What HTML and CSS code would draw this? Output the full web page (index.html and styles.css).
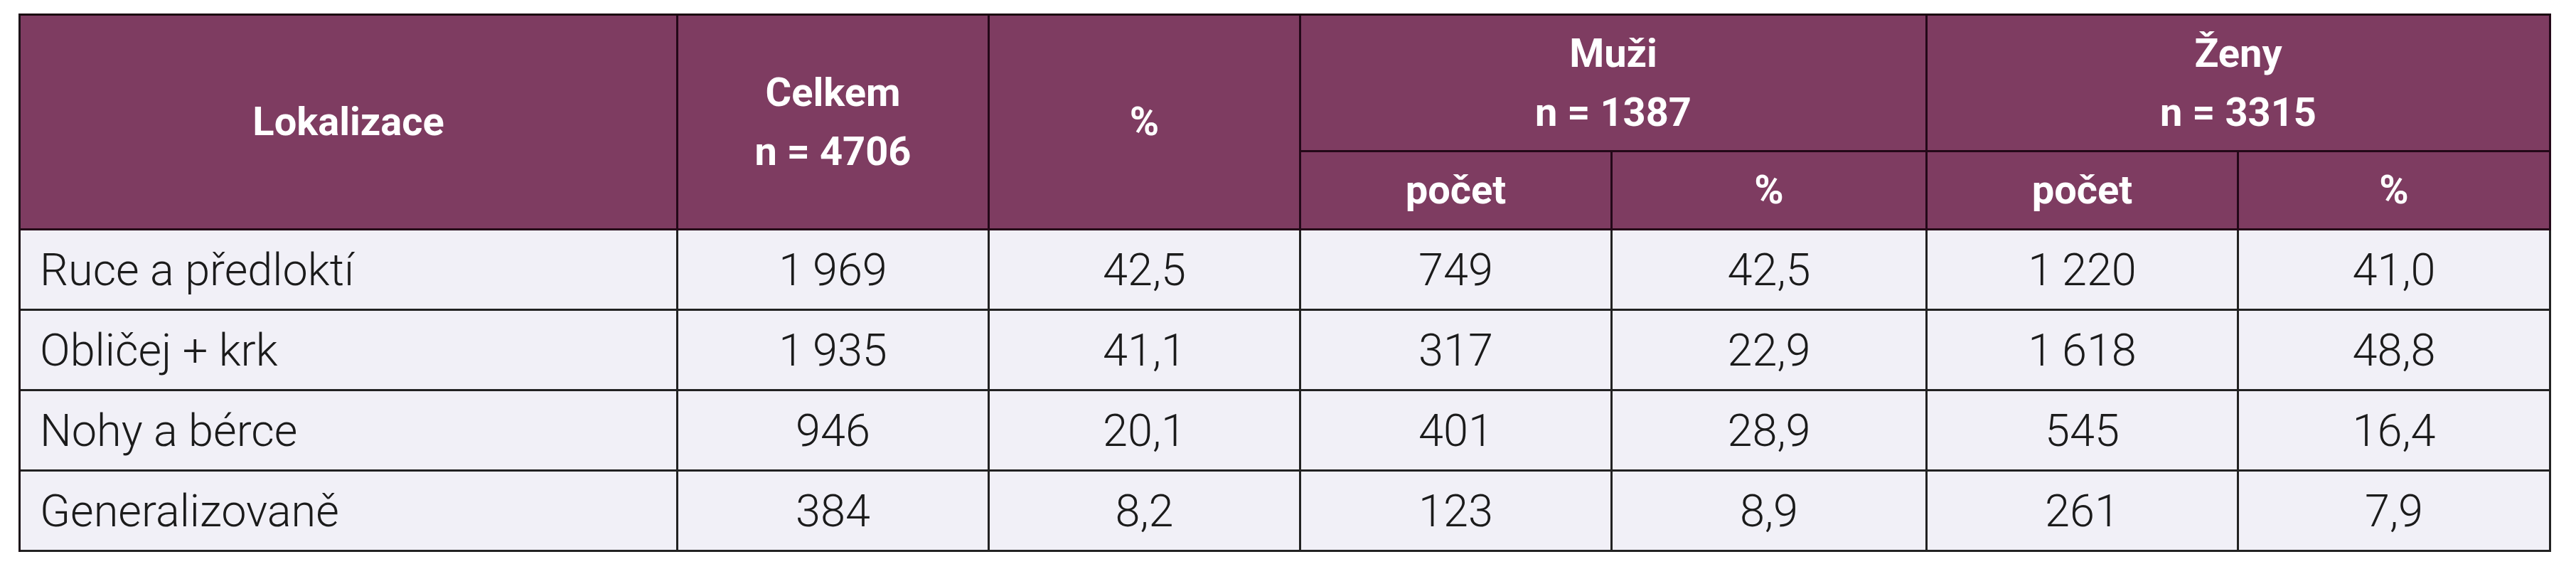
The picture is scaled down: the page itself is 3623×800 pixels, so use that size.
FILE: index.html
```html
<!DOCTYPE html>
<html lang="cs">
<head>
<meta charset="utf-8">
<title>Lokalizace</title>
<link rel="stylesheet" href="styles.css">
</head>
<body>
<table class="data">
  <colgroup>
    <col class="c-loc">
    <col class="c-num">
    <col class="c-num">
    <col class="c-num">
    <col class="c-num5">
    <col class="c-num">
    <col class="c-last">
  </colgroup>
  <thead>
    <tr class="h1">
      <th rowspan="2">Lokalizace</th>
      <th rowspan="2">Celkem<br>n = 4706</th>
      <th rowspan="2">%</th>
      <th colspan="2">Muži<br>n = 1387</th>
      <th colspan="2">Ženy<br>n = 3315</th>
    </tr>
    <tr class="h2">
      <th>počet</th>
      <th>%</th>
      <th>počet</th>
      <th>%</th>
    </tr>
  </thead>
  <tbody>
    <tr>
      <td class="label">Ruce a předloktí</td>
      <td>1&#8201;969</td>
      <td>42,5</td>
      <td>749</td>
      <td>42,5</td>
      <td>1&#8201;220</td>
      <td>41,0</td>
    </tr>
    <tr>
      <td class="label">Obličej + krk</td>
      <td>1&#8201;935</td>
      <td>41,1</td>
      <td>317</td>
      <td>22,9</td>
      <td>1&#8201;618</td>
      <td>48,8</td>
    </tr>
    <tr>
      <td class="label">Nohy a bérce</td>
      <td>946</td>
      <td>20,1</td>
      <td>401</td>
      <td>28,9</td>
      <td>545</td>
      <td>16,4</td>
    </tr>
    <tr>
      <td class="label">Generalizovaně</td>
      <td>384</td>
      <td>8,2</td>
      <td>123</td>
      <td>8,9</td>
      <td>261</td>
      <td>7,9</td>
    </tr>
  </tbody>
</table>
</body>
</html>
```

FILE: styles.css
```css
html, body {
  margin: 0;
  padding: 0;
  background: #ffffff;
}

body {
  padding: 19px 0 0 26px;
}

.data {
  table-layout: fixed;
  width: 3560px;
  border-collapse: separate;
  border-spacing: 0;
  border-top: 3px solid #1a0610;
  border-left: 3px solid #1c1218;
  font-family: Roboto, "Liberation Sans", Arial, sans-serif;
}

.c-loc { width: 925px; }
.c-num { width: 438px; }
.c-num5 { width: 443px; }
.c-last { width: 439px; }

.data th,
.data td {
  padding: 0;
  text-align: center;
  vertical-align: middle;
  border-right: 3px solid #1e1e1e;
  border-bottom: 3px solid #1e1e1e;
}

.data th {
  background: #7e3c61;
  color: #ffffff;
  font-weight: 700;
  font-size: 56px;
  line-height: 83px;
  border-color: #230818;
}

.h1 th {
  height: 189px;
}

.h2 th {
  height: 107px;
}

.data td {
  background: #f1f0f7;
  color: #1b1b1b;
  font-weight: 300;
  font-size: 63px;
  line-height: 1;
  height: 110px;
  border-color: #222222;
}

.data td.label {
  text-align: left;
  padding-left: 27px;
}
```
